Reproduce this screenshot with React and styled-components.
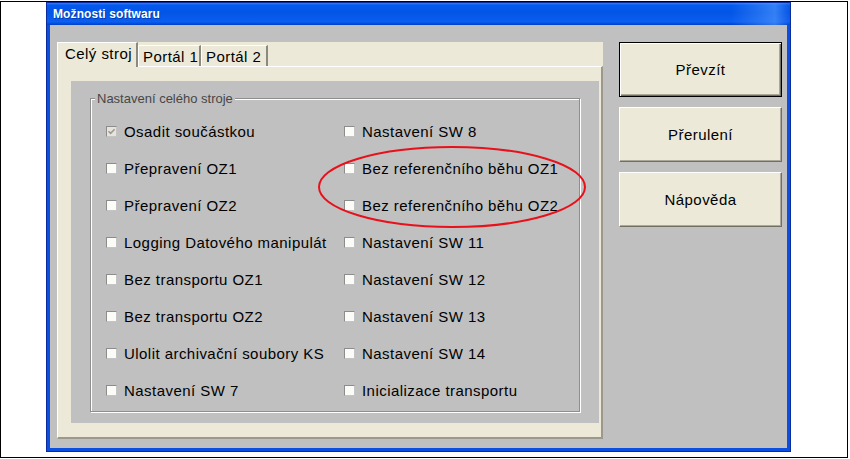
import React from 'react';
import styled, { createGlobalStyle } from 'styled-components';

const Global = createGlobalStyle`
  html, body { margin: 0; padding: 0; background: #fff; }
  body { font-family: "Liberation Sans", Arial, sans-serif; }
`;

const Frame = styled.div`
  position: relative;
  box-sizing: border-box;
  width: 848px;
  height: 457px;
  margin-top: 1px;
  border: 1px solid #000;
  background: #fff;
  padding-left: 45px;
`;

const Dialog = styled.div`
  box-sizing: border-box;
  width: 745px;
  height: 450px;
  display: flex;
  flex-direction: column;
  border: 1px solid #0a2c9c;
  background: #0a4fe0;
`;

const TitleBar = styled.div`
  height: 22px;
  display: flex;
  align-items: center;
  padding-left: 6px;
  background:
    linear-gradient(90deg, rgba(255,255,255,0) 0%, rgba(255,255,255,0) 92%, rgba(90,160,255,0.55) 98%, rgba(20,80,220,0.2) 100%),
    linear-gradient(180deg, #2a82ff 0%, #0458ec 10%, #0355e6 45%, #0a5ef0 85%, #0050e0 93%, #003dc8 100%);
  color: #fff;
  font-family: "Liberation Sans", Arial, sans-serif;
  font-weight: bold;
  font-size: 12px;
  letter-spacing: 0.1px;
  text-shadow: 1px 1px 0 rgba(0, 20, 100, 0.45);
`;

const Body = styled.div`
  flex: 1;
  display: flex;
  align-items: flex-start;
  background: #c0c0c0;
  border-style: solid;
  border-color: #0a4fe0;
  border-width: 0 3px 3px 3px;
  padding: 17px 0 0 7px;
`;

const TabControl = styled.div`
  width: 546px;
  height: 397px;
  display: flex;
  flex-direction: column;
  background: #ece9d8;
`;

const TabStrip = styled.div`
  height: 24px;
  display: flex;
  align-items: flex-end;
`;

const Tab = styled.div`
  position: relative;
  z-index: ${p => (p.$active ? 2 : 1)};
  box-sizing: border-box;
  width: ${p => p.$w}px;
  height: ${p => (p.$active ? 25 : 21)}px;
  margin-bottom: ${p => (p.$active ? -1 : 0)}px;
  display: flex;
  align-items: center;
  padding-left: ${p => (p.$active ? 7 : 4)}px;
  padding-bottom: ${p => (p.$active ? 3 : 0)}px;
  background: #ece9d8;
  border-top: 1px solid #fff;
  border-left: 1px solid #fff;
  border-right: 2px solid #8c8a7e;
  font-size: 15px;
  letter-spacing: 0.45px;
  color: #000;
  white-space: nowrap;
`;

const Panel = styled.div`
  flex: 1;
  display: flex;
  border-top: 1px solid #fff;
  border-left: 1px solid #fff;
  border-right: 2px solid #9c998c;
  border-bottom: 2px solid #9c998c;
  padding: 14px 2px 14px 13px;
`;

const InnerArea = styled.div`
  flex: 1;
  display: flex;
  background: #c0c0c0;
  padding: 17px 19px 11px 19px;
`;

const Group = styled.div`
  position: relative;
  flex: 1;
  border: 1px solid #8e8e8e;
  box-shadow: inset 1px 1px 0 #fff, 1px 1px 0 #fff;
  padding: 14px 0 0 15px;
  display: grid;
  grid-template-columns: 238px 1fr;
  grid-auto-rows: 37px;
  align-content: start;
`;

const GroupLabel = styled.span`
  position: absolute;
  top: -8px;
  left: 4px;
  padding: 0 2px;
  background: #c0c0c0;
  font-size: 13px;
  line-height: 15px;
  color: #474747;
`;

const Row = styled.label`
  display: flex;
  align-items: center;
  gap: 7px;
  font-size: 15px;
  letter-spacing: 0.45px;
  color: #000;
  white-space: nowrap;
`;

const Box = styled.span`
  box-sizing: border-box;
  width: 11px;
  height: 11px;
  flex: none;
  display: flex;
  align-items: center;
  justify-content: center;
  background: ${p => (p.$disabled ? '#e6e4dc' : '#fbfbf8')};
  border: 1px solid;
  border-color: #8c8c8c #c4c4c4 #c4c4c4 #8c8c8c;
`;

const Buttons = styled.div`
  display: flex;
  flex-direction: column;
  gap: 10px;
  margin-left: 16px;
`;

const Button = styled.button`
  box-sizing: border-box;
  width: 163px;
  height: 55px;
  padding: 0;
  background: #ece9d8;
  font-family: "Liberation Sans", Arial, sans-serif;
  font-size: 15px;
  letter-spacing: 0.45px;
  color: #000;
  border: 1px solid;
  border-color: ${p => (p.$default ? '#000' : '#fff #716f64 #716f64 #fff')};
  box-shadow: ${p =>
    p.$default
      ? 'inset 1px 1px 0 #fff, inset -1px -1px 0 #716f64, inset -2px -2px 0 #aca899'
      : 'inset -1px -1px 0 #aca899'};
`;

const Annotation = styled.svg`
  position: absolute;
  left: 316px;
  top: 142px;
  pointer-events: none;
`;

const left = [
  { t: 'Osadit součástkou', checked: true, disabled: true },
  { t: 'Přepravení OZ1' },
  { t: 'Přepravení OZ2' },
  { t: 'Logging Datového manipulát' },
  { t: 'Bez transportu OZ1' },
  { t: 'Bez transportu OZ2' },
  { t: 'Ulolit archivační soubory KS' },
  { t: 'Nastavení SW 7' },
];
const right = [
  'Nastavení SW 8',
  'Bez referenčního běhu OZ1',
  'Bez referenčního běhu OZ2',
  'Nastavení SW 11',
  'Nastavení SW 12',
  'Nastavení SW 13',
  'Nastavení SW 14',
  'Inicializace transportu',
];

function Check({ item }) {
  return (
    <Row>
      <Box $disabled={item.disabled}>
        {item.checked && (
          <svg width="9" height="9" viewBox="0 0 9 9">
            <path d="M1.5 4.2 L3.6 6.3 L7.6 2.2" fill="none" stroke="#9a9a94" strokeWidth="1.6" />
          </svg>
        )}
      </Box>
      {item.t}
    </Row>
  );
}

export default function App() {
  const cells = [];
  for (let i = 0; i < 8; i++) {
    cells.push(<Check key={'l' + i} item={left[i]} />);
    cells.push(<Check key={'r' + i} item={{ t: right[i] }} />);
  }
  return (
    <>
      <Global />
      <Frame>
        <Dialog>
          <TitleBar>Možnosti softwaru</TitleBar>
          <Body>
            <TabControl>
              <TabStrip>
                <Tab $active $w={81}>Celý stroj</Tab>
                <Tab $w={63}>Portál 1</Tab>
                <Tab $w={67}>Portál 2</Tab>
              </TabStrip>
              <Panel>
                <InnerArea>
                  <Group>
                    <GroupLabel>Nastavení celého stroje</GroupLabel>
                    {cells}
                  </Group>
                </InnerArea>
              </Panel>
            </TabControl>
            <Buttons>
              <Button $default>Převzít</Button>
              <Button>Přerulení</Button>
              <Button>Nápověda</Button>
            </Buttons>
          </Body>
        </Dialog>
        <Annotation width="270" height="86" viewBox="0 0 270 86">
          <ellipse cx="135" cy="43" rx="133" ry="40" fill="none" stroke="#e8101a" strokeWidth="2" />
        </Annotation>
      </Frame>
    </>
  );
}
